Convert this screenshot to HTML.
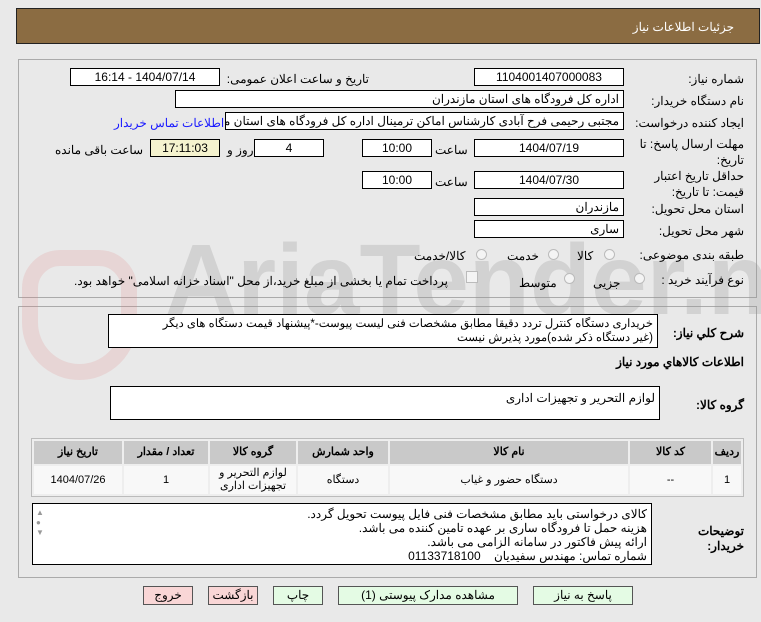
<!DOCTYPE html>
<html><head><meta charset="utf-8"><style>
*{box-sizing:border-box}
body{margin:0;width:761px;height:622px;background:#e9e9e9;font-family:Tahoma,"Liberation Sans","Noto Sans CJK SC",sans-serif;font-size:12px;color:#000;position:relative;overflow:hidden}
.a{position:absolute}
.in{position:absolute;background:#fff;border:1px solid #000;height:18px;line-height:16px;padding:0 4px;direction:rtl;white-space:nowrap;overflow:hidden;font-size:12px}
.c{text-align:center}
.l{position:absolute;direction:rtl;white-space:nowrap;font-size:12px;text-align:right;line-height:14px}
.btn{position:absolute;height:19px;border:1px solid #555;background:#e4fbe4;text-align:center;line-height:17px;font-size:12px}
.red{background:#f9d6d6}
table{border-collapse:separate;border-spacing:2px}
td,th{text-align:center;font-size:11px;padding:0;line-height:13px}
th{background:#c9c9c9;height:23px}
td{background:#f8f8f8;height:28px}
.rad{position:absolute;width:11px;height:11px;border:1px solid #bbb;border-radius:50%;background:#f4f4f4}
</style></head><body>
<div class="a" style="left:16px;top:8px;width:744px;height:36px;background:#8b6c42;border:1px solid #222"></div>
<div class="l" style="right:27px;top:20px;color:#fff">جزئیات اطلاعات نیاز</div>

<div class="a" style="left:18px;top:59px;width:739px;height:239px;border:1px solid #aaa"></div>
<div class="a" style="left:18px;top:306px;width:739px;height:272px;border:1px solid #aaa"></div>

<!-- watermark -->
<div class="a" style="left:22px;top:250px;width:115px;height:130px;border:16px solid rgba(220,120,120,.18);border-radius:40px 40px 60px 60px"></div>
<div class="a" style="left:165px;top:225px;font-size:100px;line-height:110px;font-weight:bold;color:rgba(150,150,150,.28);font-family:'Liberation Sans',sans-serif;white-space:nowrap">AriaTender.net</div>

<div class="l" style="right:17px;top:72px">شماره نیاز:</div>
<div class="in c" style="left:474px;top:68px;width:150px">1104001407000083</div>
<div class="l" style="right:392px;top:72px">تاریخ و ساعت اعلان عمومی:</div>
<div class="in c" style="left:70px;top:68px;width:150px">1404/07/14 - 16:14</div>

<div class="l" style="right:17px;top:94px">نام دستگاه خریدار:</div>
<div class="in" style="left:175px;top:90px;width:449px">اداره کل فرودگاه های استان مازندران</div>

<div class="l" style="right:17px;top:116px">ایجاد کننده درخواست:</div>
<div class="in" style="left:225px;top:112px;width:399px">مجتبی رحیمی فرح آبادی کارشناس اماکن ترمینال اداره کل فرودگاه های استان مازندران</div>
<div class="l" style="left:114px;top:116px;color:#1a1aff">اطلاعات تماس خریدار</div>

<div class="l" style="right:17px;top:136px;line-height:16px">مهلت ارسال پاسخ: تا<br>تاریخ:</div>
<div class="in c" style="left:474px;top:139px;width:150px">1404/07/19</div>
<div class="l" style="left:435px;top:143px">ساعت</div>
<div class="in c" style="left:362px;top:139px;width:70px">10:00</div>
<div class="in c" style="left:254px;top:139px;width:70px">4</div>
<div class="l" style="left:227px;top:143px">روز و</div>
<div class="in c" style="left:150px;top:139px;width:70px;background:#f5f3cf">17:11:03</div>
<div class="l" style="left:55px;top:143px">ساعت باقی مانده</div>

<div class="l" style="right:17px;top:168px;line-height:16px">حداقل تاریخ اعتبار<br>قیمت: تا تاریخ:</div>
<div class="in c" style="left:474px;top:171px;width:150px">1404/07/30</div>
<div class="l" style="left:435px;top:175px">ساعت</div>
<div class="in c" style="left:362px;top:171px;width:70px">10:00</div>

<div class="l" style="right:17px;top:202px">استان محل تحویل:</div>
<div class="in" style="left:474px;top:198px;width:150px">مازندران</div>
<div class="l" style="right:17px;top:224px">شهر محل تحویل:</div>
<div class="in" style="left:474px;top:220px;width:150px">ساری</div>

<div class="l" style="right:17px;top:248px">طبقه بندی موضوعی:</div>
<div class="rad" style="left:604px;top:249px"></div><div class="l" style="left:577px;top:249px">کالا</div>
<div class="rad" style="left:548px;top:249px"></div><div class="l" style="left:507px;top:249px">خدمت</div>
<div class="rad" style="left:476px;top:249px"></div><div class="l" style="left:414px;top:249px">کالا/خدمت</div>

<div class="l" style="right:17px;top:273px">نوع فرآیند خرید :</div>
<div class="rad" style="left:634px;top:273px"></div><div class="l" style="left:593px;top:276px">جزیی</div>
<div class="rad" style="left:564px;top:273px"></div><div class="l" style="left:519px;top:276px">متوسط</div>
<div class="a" style="left:466px;top:271px;width:12px;height:12px;border:1px solid #bbb;background:#f4f4f4"></div>
<div class="l" style="left:74px;top:274px">پرداخت تمام یا بخشی از مبلغ خرید،از محل "اسناد خزانه اسلامی" خواهد بود.</div>

<div class="l" style="right:17px;top:326px;font-weight:bold">شرح کلي نیاز:</div>
<div class="in" style="left:108px;top:314px;width:550px;height:34px;line-height:14px;white-space:normal;padding-top:2px;font-size:11.5px;letter-spacing:-0.2px">خریداری دستگاه کنترل تردد دقیقا مطابق مشخصات فنی لیست پیوست-*پیشنهاد قیمت دستگاه های دیگر<br>(غیر دستگاه ذکر شده)مورد پذیرش نیست</div>

<div class="l" style="right:17px;top:355px;font-weight:bold">اطلاعات کالاهاي مورد نياز</div>
<div class="l" style="right:17px;top:398px;font-weight:bold">گروه کالا:</div>
<div class="in" style="left:110px;top:386px;width:550px;height:34px;line-height:14px;padding-top:4px">لوازم التحریر و تجهیزات اداری</div>

<div class="a" style="left:31px;top:438px;width:713px;height:59px;border:1px solid #bbb;background:#eee">
<table dir="rtl" style="width:711px">
<tr><th style="width:28px">ردیف</th><th style="width:81px">کد کالا</th><th style="width:238px">نام کالا</th><th style="width:90px">واحد شمارش</th><th style="width:86px">گروه کالا</th><th style="width:84px">تعداد / مقدار</th><th>تاریخ نیاز</th></tr>
<tr><td>1</td><td>--</td><td>دستگاه حضور و غیاب</td><td>دستگاه</td><td>لوازم التحریر و<br>تجهیزات اداری</td><td>1</td><td>1404/07/26</td></tr>
</table></div>

<div class="l" style="right:17px;top:524px;font-weight:bold;line-height:15px">توضیحات<br>خریدار:</div>
<div class="in" style="left:32px;top:503px;width:620px;height:62px;line-height:14px;white-space:normal;padding:3px 4px 0 30px">کالای درخواستی باید مطابق مشخصات فنی فایل پیوست تحویل گردد.<br>هزینه حمل تا فرودگاه ساری بر عهده تامین کننده می باشد.<br>ارائه پیش فاکتور در سامانه الزامی می باشد.<br>شماره تماس: مهندس سفیدیان &nbsp;&nbsp; 01133718100</div>
<div class="a" style="left:36px;top:508px;color:#999;font-size:8px;line-height:10px">▲<br>●<br>▼</div>

<div class="btn" style="left:533px;top:586px;width:100px">پاسخ به نیاز</div>
<div class="btn" style="left:338px;top:586px;width:180px">مشاهده مدارک پیوستی (1)</div>
<div class="btn" style="left:273px;top:586px;width:50px">چاپ</div>
<div class="btn red" style="left:208px;top:586px;width:50px">بازگشت</div>
<div class="btn red" style="left:143px;top:586px;width:50px">خروج</div>
</body></html>
